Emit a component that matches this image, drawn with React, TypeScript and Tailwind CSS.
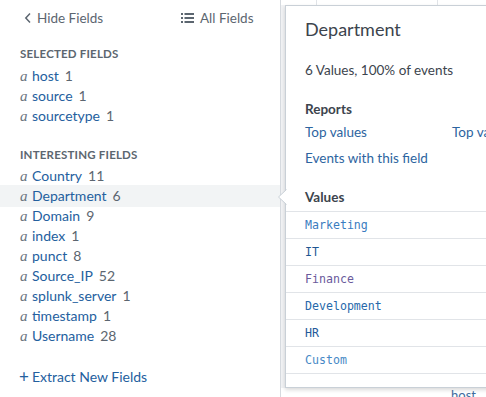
import React from 'react'

const selected = [
    { name: "host", count: 1 },
    { name: "source", count: 1 },
    { name: "sourcetype", count: 1 },
];

const interesting = [
    { name: "Country", count: 11 },
    { name: "Department", count: 6, active: true },
    { name: "Domain", count: 9 },
    { name: "index", count: 1 },
    { name: "punct", count: 8 },
    { name: "Source_IP", count: 52 },
    { name: "splunk_server", count: 1 },
    { name: "timestamp", count: 1 },
    { name: "Username", count: 28 },
];

const values = [
    { label: "Marketing", color: "text-[#3a7cc0]" },
    { label: "IT", color: "text-[#1f5692]" },
    { label: "Finance", color: "text-[#6a5a9c]" },
    { label: "Development", color: "text-[#2768aa]" },
    { label: "HR", color: "text-[#235a9a]" },
    { label: "Custom", color: "text-[#4789c6]" },
];

function FieldRow(props) {
    return (
        <div className={"flex items-center h-[20px] pl-[20px] " + (props.active ? "bg-[#f2f4f5] h-[22px] -my-px" : "")}>
            <span className="font-['Liberation_Serif',serif] italic text-[15px] text-[#6b7580] w-[12px]">a</span>
            <span className="text-[#24609e]">{props.name}</span>
            <span className="ml-[6px] text-[#5c6670]">{props.count}</span>
        </div>
    );
}

export default function App() {
    return (
        <div className="relative flex w-[486px] h-[397px] overflow-hidden bg-white font-['Lato',sans-serif] text-[14px] leading-[20px]">
            {/* field sidebar */}
            <div className="w-[280px] shrink-0">
                <div className="flex items-center h-[36px] text-[13.5px] text-[#5c6670]">
                    <div className="flex items-center pl-[24px] w-[181px]">
                        <svg width="8" height="12" viewBox="0 0 8 12" className="mr-[5px]">
                            <path d="M6 1.5 L1.8 6 L6 10.5" fill="none" stroke="#5c6670" strokeWidth="1.5" />
                        </svg>
                        Hide Fields
                    </div>
                    <div className="flex items-center">
                        <svg width="13" height="10" viewBox="0 0 13 10" className="mr-[6px]">
                            <rect x="0" y="0" width="2" height="2" fill="#5c6670" />
                            <rect x="0" y="4" width="2" height="2" fill="#5c6670" />
                            <rect x="0" y="8" width="2" height="2" fill="#5c6670" />
                            <rect x="3.5" y="0" width="9.5" height="2" fill="#5c6670" />
                            <rect x="3.5" y="4" width="9.5" height="2" fill="#5c6670" />
                            <rect x="3.5" y="8" width="9.5" height="2" fill="#5c6670" />
                        </svg>
                        All Fields
                    </div>
                </div>

                <div className="mt-[10px] pl-[20px] text-[11.5px] leading-[16px] font-bold text-[#5c6670] tracking-[0.2px]">SELECTED FIELDS</div>
                <div className="mt-[4px]">
                    {selected.map((f) => <FieldRow key={f.name} name={f.name} count={f.count} />)}
                </div>

                <div className="mt-[21px] pl-[20px] text-[11.5px] leading-[16px] font-bold text-[#5c6670] tracking-[0.2px]">INTERESTING FIELDS</div>
                <div className="mt-[3px]">
                    {interesting.map((f) => <FieldRow key={f.name} name={f.name} count={f.count} active={f.active} />)}
                </div>

                <div className="mt-[21px] pl-[19px] text-[#24609e] flex items-center">
                    <span className="text-[17px] mr-[3px] leading-[20px]">+</span>Extract New Fields
                </div>
            </div>

            {/* results area behind the popover */}
            <div className="flex-1 flex flex-col border-l border-[#d6dadf]">
                <div className="flex h-[5px] ml-[35px]">
                    <div className="w-[121px] border-l border-[#e1e4e8]"></div>
                    <div className="border-l border-[#e1e4e8]"></div>
                </div>
                <div className="flex-1 flex">
                    <div className="w-[4px] bg-[#f1f2f4]"></div>
                </div>
                <div className="pl-[170px] h-[9px] text-[13px] leading-[14px] text-[#3d6d9e]">host =</div>
            </div>

            {/* field summary popover */}
            <div className="absolute left-[285px] top-[5px] w-[300px] h-[383px] bg-white border border-[#c9d0d7] shadow-[0_2px_4px_rgba(0,0,0,0.15)] text-[#3c444d] whitespace-nowrap">
                <svg width="10" height="16" viewBox="0 0 10 16" className="absolute left-[-9px] top-[183px]">
                    <path d="M9.5 0.5 L1.5 8 L9.5 15.5" fill="white" stroke="#c9d0d7" strokeWidth="1" />
                    <rect x="9" y="1" width="2" height="14" fill="white" />
                </svg>
                <div className="pl-[19px] pt-[13px] text-[18px] leading-[20px]">Department</div>
                <div className="pl-[19px] mt-[21px] text-[13.5px]">6 Values, 100% of events</div>
                <div className="pl-[19px] mt-[19px] font-bold text-[13.5px]">Reports</div>
                <div className="pl-[19px] mt-[3px] flex text-[13.5px] text-[#2d64a0]">
                    <span className="w-[147px] shrink-0">Top values</span>
                    <span className="shrink-0">Top values by time</span>
                </div>
                <div className="pl-[19px] mt-[6px] text-[13.5px] text-[#2d64a0]">Events with this field</div>
                <div className="pl-[19px] mt-[19px] font-bold text-[13.5px]">Values</div>
                <div className="mt-[4px] border-t border-[#e1e4e8]">
                    {values.map((v) => (
                        <div key={v.label} className={"h-[27px] flex items-center pl-[19px] border-b border-[#e1e4e8] font-['DejaVu_Sans_Mono',monospace] text-[11.6px] " + v.color}>
                            {v.label}
                        </div>
                    ))}
                </div>
            </div>
        </div>
    );
}
